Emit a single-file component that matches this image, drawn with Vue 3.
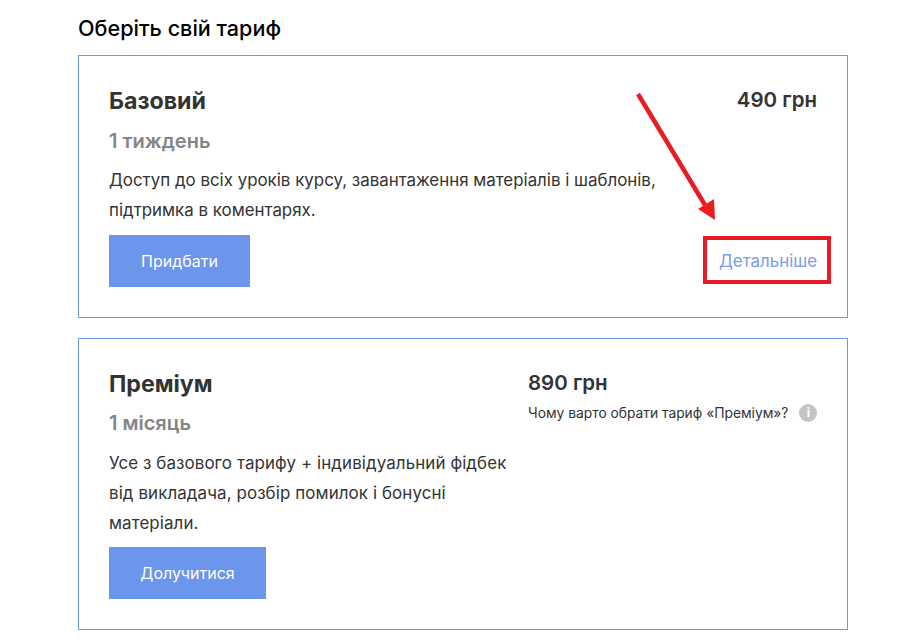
<template>
  <main class="page">
    <h2 class="heading">Оберіть свій тариф</h2>

    <section class="card card-basic">
      <div class="info">
        <h3 class="name">Базовий</h3>
        <p class="term">1 тиждень</p>
        <p class="desc">Доступ до всіх уроків курсу, завантаження матеріалів і шаблонів, підтримка в коментарях.</p>
        <button class="buy buy-basic">Придбати</button>
      </div>
      <div class="side-basic">
        <div class="price">490 грн</div>
        <a class="more">Детальніше</a>
      </div>
      <svg class="arrow" width="100" height="140" viewBox="0 0 100 140">
        <line x1="3" y1="5" x2="70" y2="116" stroke="#e81c24" stroke-width="4.5" />
        <polygon points="80,131 63,120 79,110" fill="#e81c24" />
      </svg>
    </section>

    <section class="card card-premium">
      <div class="info info-premium">
        <h3 class="name">Преміум</h3>
        <p class="term term-premium">1 місяць</p>
        <p class="desc desc-premium">Усе з базового тарифу + індивідуальний фідбек від викладача, розбір помилок і бонусні матеріали.</p>
        <button class="buy buy-premium">Долучитися</button>
      </div>
      <div class="side-premium">
        <div class="price">890 грн</div>
        <div class="why">
          <span>Чому варто обрати тариф «Преміум»?</span>
          <span class="info-icon">i</span>
        </div>
      </div>
    </section>
  </main>
</template>

<script setup>
</script>

<style>
html, body { margin: 0; background: #fff; }
</style>

<style scoped>
.page {
  width: 770px;
  margin-left: 78px;
  padding-top: 15px;
  font-family: Inter, "Noto Sans", sans-serif;
  color: #333;
}
.heading {
  margin: 0 0 14px;
  font-size: 21.6px;
  line-height: 26px;
  font-weight: 500;
  color: #000;
}
.card {
  position: relative;
  box-sizing: border-box;
  border: 1px solid #6c96e8;
  padding: 30px;
  display: flex;
}
.card-basic { height: 263px; margin-bottom: 20px; justify-content: space-between; }
.card-premium { height: 292px; }
.info { width: 560px; }
.info-premium { width: 419px; flex: none; }
.name {
  margin: 0;
  font-size: 23.2px;
  line-height: 30px;
  font-weight: 700;
  color: #333;
}
.term {
  margin: 12px 0 0;
  font-size: 20px;
  line-height: 26px;
  font-weight: 600;
  color: #858585;
}
.term-premium { margin-top: 11px; }
.desc {
  margin: 11px 0 0;
  font-size: 16.9px;
  line-height: 30px;
  color: #333;
}
.desc-premium { margin-top: 12px; letter-spacing: 0.11px; }
.buy {
  display: block;
  height: 52px;
  border: 0;
  margin-top: 10px;
  background: #6c96ec;
  color: #fff;
  font: 400 16px Inter, "Noto Sans", sans-serif;
}
.buy-basic { width: 141px; }
.buy-premium { width: 157px; margin-top: 9px; }
.side-basic {
  display: flex;
  flex-direction: column;
  align-items: flex-end;
  justify-content: space-between;
}
.price {
  margin-top: -1px;
  font-size: 20.5px;
  line-height: 30px;
  font-weight: 600;
  color: #333;
}
.more {
  font-size: 16.9px;
  line-height: 20px;
  color: #7c9cf0;
  padding: 11px 10px 9px 12px;
  margin: 0 -14px 3px 0;
  border: 4px solid #e81c24;
}
.side-premium { flex: none; }
.why {
  display: flex;
  align-items: center;
  gap: 11px;
  margin-top: 6px;
  font-size: 13.8px;
  line-height: 18px;
  white-space: nowrap;
  color: #333;
}
.info-icon {
  width: 18px;
  height: 18px;
  border-radius: 50%;
  background: #c4c4c4;
  color: #fff;
  font-size: 12px;
  font-weight: 800;
  text-align: center;
  line-height: 18px;
}
.arrow {
  position: absolute;
  left: 556px;
  top: 33px;
}
</style>
